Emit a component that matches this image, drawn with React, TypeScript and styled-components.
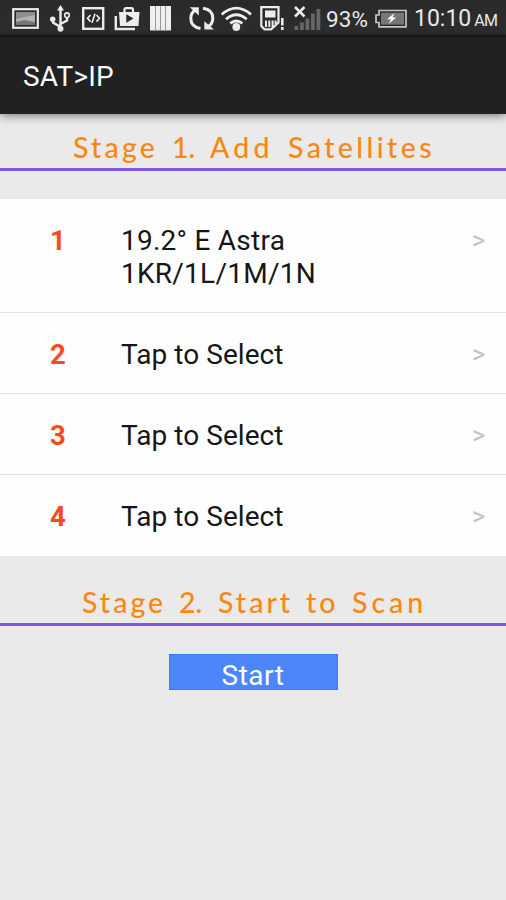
import React from "react";
import styled, { createGlobalStyle } from "styled-components";

const GlobalStyle = createGlobalStyle`
  * { box-sizing: border-box; }
  html, body { margin: 0; padding: 0; background: #eaeaea; }
`;

const Screen = styled.div`
  width: 506px;
  height: 900px;
  overflow: hidden;
  display: flex;
  flex-direction: column;
  background: #eaeaea;
  font-family: Roboto, "Liberation Sans", sans-serif;
`;

const StatusBar = styled.header`
  height: 37px;
  flex: none;
  display: flex;
  background: linear-gradient(#292929, #2e2e2e 34px, #191919 36px);
  color: #e8e8e8;
`;

const StatusIcons = styled.svg`
  flex: none;
  width: 326px;
  height: 37px;
`;

const Percent = styled.span`
  width: 48px;
  font-size: 22.5px;
  line-height: 38px;
  white-space: nowrap;
  letter-spacing: 0.1px;
`;

const BatteryIcon = styled.svg`
  flex: none;
  width: 36px;
  height: 37px;
`;

const Clock = styled.span`
  margin-left: 4px;
  font-size: 23px;
  line-height: 38px;
  letter-spacing: 0;
  white-space: nowrap;
`;

const Meridiem = styled.small`
  margin-left: 3px;
  font-size: 16px;
  letter-spacing: -0.6px;
`;

const AppBar = styled.div`
  height: 77px;
  flex: none;
  padding-left: 23px;
  background: #212121;
  color: #fafafa;
  font-size: 28px;
  line-height: 79px;
  letter-spacing: 0.2px;
  box-shadow: 0 1px 10px rgba(0, 0, 0, 0.55);
`;

const StageTitle = styled.h2<{ $top: number; $height: number; $left: number }>`
  margin: ${(p) => p.$top}px 0 0;
  height: ${(p) => p.$height}px;
  flex: none;
  padding-left: ${(p) => p.$left}px;
  display: flex;
  align-items: flex-end;
  border-bottom: 3px solid #7e57e8;
  color: #fb8713;
  font-family: Lato, sans-serif;
  font-size: 28.5px;
  font-weight: 500;
  line-height: 41px;
  white-space: pre;
`;

const Word = styled.span<{ $width: number; $tracking: number }>`
  width: ${(p) => p.$width}px;
  letter-spacing: ${(p) => p.$tracking}px;
`;

const SatelliteList = styled.ul<{ $top: number }>`
  list-style: none;
  margin: ${(p) => p.$top}px 0 0;
  padding: 0;
  flex: none;
  background: #fefefe;
`;

const SatelliteRow = styled.li`
  height: 81px;
  padding: 25px 21px 0 0;
  display: grid;
  grid-template-columns: 121px 240px 1fr;
  line-height: 33px;
  font-size: 28px;
  color: #161616;

  &:first-child { height: 114px; }
  &:not(:last-child) { border-bottom: 1.5px solid #e3e3e3; }
`;

const Index = styled.strong`
  padding-left: 50px;
  color: #fb4a1f;
  font-weight: 700;
  font-size: 27.5px;
`;

const Label = styled.span<{ $tracking: number }>`
  white-space: pre-line;
  letter-spacing: ${(p) => p.$tracking}px;
`;

const Chevron = styled.span`
  text-align: right;
  color: #c2c2c2;
  font-size: 25px;
`;

const StartButton = styled.button`
  align-self: center;
  flex: none;
  width: 169px;
  height: 36px;
  margin-top: 28px;
  padding: 3px 0 0;
  border: 1px solid #3b7df0;
  background: #4d86fb;
  color: #fff;
  font: 400 28px/36px Roboto, sans-serif;
  letter-spacing: 0.5px;
`;

type StageWord = [text: string, width: number, tracking: number];

const stageOne: StageWord[] = [
  ["Stage", 99, 3.2],
  ["1.", 38, 0],
  ["Add", 78, 4.2],
  ["Satellites", 148, 3.4],
];
const stageTwo: StageWord[] = [
  ["Stage", 97, 3],
  ["2.", 39, 0],
  ["Start", 88, 3],
  ["to", 46, 3],
  ["Scan", 76, 4],
];

const satellites = ["19.2° E Astra\n1KR/1L/1M/1N", "Tap to Select", "Tap to Select", "Tap to Select"];

function Stage({ words, ...box }: { words: StageWord[]; $top: number; $height: number; $left: number }) {
  return (
    <StageTitle {...box}>
      {words.map(([text, width, tracking]) => (
        <Word key={text} $width={width} $tracking={tracking}>{text}</Word>
      ))}
    </StageTitle>
  );
}

function Notifications() {
  return (
    <StatusIcons viewBox="0 0 326 37" fill="none" stroke="#ededed">
      {/* picture */}
      <rect x="13.2" y="9.2" width="24.6" height="18.6" strokeWidth="2.2" />
      <rect x="16" y="12" width="19" height="13" fill="#8d8d8d" stroke="none" />
      <path d="M16 19L25 17L35 15V25H16Z" fill="#b3b3b3" stroke="none" />
      <path d="M16 22L24 20L35 22V25H16Z" fill="#777" stroke="none" />
      {/* usb */}
      <path d="M60.5 8V29M60.5 27L53 22.5V19M60.5 24L67 20.5V17" strokeWidth="2.4" />
      <path d="M60.5 5L64 10.5H57Z" fill="#ededed" stroke="none" />
      <circle cx="60.5" cy="28.8" r="3" fill="#ededed" stroke="none" />
      <circle cx="52.7" cy="19.3" r="2.7" fill="#ededed" stroke="none" />
      <circle cx="67" cy="15.2" r="2.3" strokeWidth="1.6" />
      {/* developer mode */}
      <rect x="83.2" y="8.2" width="20" height="20.6" strokeWidth="2.4" />
      <path d="M90.5 15L87.5 18.3L90.5 21.6M96.5 15L99.5 18.3L96.5 21.6M95 13.8L92 22.8" strokeWidth="1.6" />
      {/* store */}
      <path d="M115.8 16V29H135" strokeWidth="2.4" />
      <path d="M119 12H139.5L138.5 26H120Z" fill="#ededed" stroke="none" />
      <path d="M124.5 12V9.7Q124.5 8.2 126 8.2H131.5Q133 8.2 133 9.7V12" strokeWidth="2.2" />
      <path d="M126.3 14.2L133.5 18.5L126.3 22.8Z" fill="#292929" stroke="none" />
      {/* striped panel */}
      <rect x="150" y="6" width="21" height="24.5" fill="#f0f0f0" stroke="none" />
      <path d="M155.5 6V30.5M160.5 6V30.5M165.5 6V30.5" stroke="#999" strokeWidth="1" />
      {/* sync */}
      <path d="M200.5 28.4C194 27.5 190.8 23.7 190.8 18.3C190.8 15 192.5 11.9 195.4 10.1" strokeWidth="3" />
      <path d="M203 8.2C209.5 9 212.8 13 212.8 18.2C212.8 21.8 211 24.8 208.3 26.6" strokeWidth="3" />
      <path d="M189.8 7.2H198.8V15.6Z" fill="#ededed" stroke="none" />
      <path d="M204.3 21.2L214 29.6H204.3Z" fill="#ededed" stroke="none" />
      {/* wifi */}
      <path d="M221.7 14.5Q236.3 1.8 251 14.5M226 19.2Q236.3 10.4 246.7 19.2M230.3 23.3Q236.3 18.6 242.4 23.3" strokeWidth="2.8" />
      <circle cx="236.3" cy="27" r="3.9" fill="#ededed" stroke="none" />
      {/* memory card warning */}
      <path d="M261.3 7.2H278.5V22.5L271 29.3H264.5L261.3 26Z" strokeWidth="2.2" />
      <rect x="265" y="10.5" width="10.5" height="7" fill="#ededed" stroke="none" />
      <path d="M266 20.5V27M269.3 20.5V27M272.6 20.5V27M275.6 20.5V24" strokeWidth="2" />
      <path d="M282.3 18V25.5M282.3 27V30" strokeWidth="2.6" />
      {/* signal */}
      <path d="M295 7L304.5 16.5M304.5 7L295 16.5" strokeWidth="2.5" />
      <g fill="#676767" stroke="none">
        <rect x="294.5" y="26" width="3.8" height="4" />
        <rect x="300" y="22.5" width="3.8" height="7.5" />
        <rect x="305.5" y="18.5" width="3.8" height="11.5" />
        <rect x="311" y="13.5" width="3.8" height="16.5" />
        <rect x="316.5" y="9" width="3.8" height="21" />
      </g>
    </StatusIcons>
  );
}

export default function App() {
  return (
    <Screen>
      <GlobalStyle />
      <StatusBar>
        <Notifications />
        <Percent>93%</Percent>
        <BatteryIcon viewBox="0 0 36 37">
          <path d="M5 10.5H32V26.8H5V22.5H2V15H5Z" fill="#292929" stroke="#c8c8c8" strokeWidth="1.7" />
          <rect x="7" y="12.7" width="23" height="12" fill="#777" />
          <path d="M20.5 13L13 19.3H17L14.5 24L22.2 17.5H18.5Z" fill="#fff" />
        </BatteryIcon>
        <Clock>10:10<Meridiem>AM</Meridiem></Clock>
      </StatusBar>
      <AppBar>SAT&gt;IP</AppBar>
      <Stage words={stageOne} $top={15} $height={42} $left={73} />
      <SatelliteList $top={28}>
        {satellites.map((name, i) => (
          <SatelliteRow key={i}>
            <Index>{i + 1}</Index>
            <Label $tracking={i === 0 ? 0.25 : 0.05}>{name}</Label>
            <Chevron>&gt;</Chevron>
          </SatelliteRow>
        ))}
      </SatelliteList>
      <Stage words={stageTwo} $top={28} $height={42} $left={82} />
      <StartButton>Start</StartButton>
    </Screen>
  );
}
